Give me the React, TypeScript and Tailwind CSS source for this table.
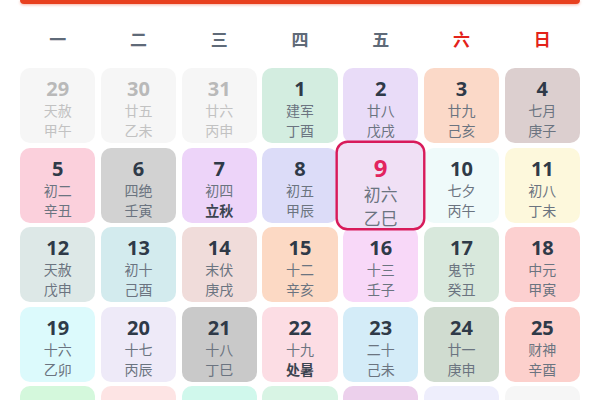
import React from "react";

type Day = {
  n: number;
  l1: string;
  l2: string;
  bg: string;
  muted?: boolean;
  term?: boolean;
  today?: boolean;
};

const weekdays = ["一", "二", "三", "四", "五", "六", "日"];

const days: Day[] = [
  { n: 29, l1: "天赦", l2: "甲午", bg: "bg-[#f6f6f6]", muted: true },
  { n: 30, l1: "廿五", l2: "乙未", bg: "bg-[#f6f6f6]", muted: true },
  { n: 31, l1: "廿六", l2: "丙申", bg: "bg-[#f6f6f6]", muted: true },
  { n: 1, l1: "建军", l2: "丁酉", bg: "bg-[#d3ede0]" },
  { n: 2, l1: "廿八", l2: "戊戌", bg: "bg-[#e9dcf8]" },
  { n: 3, l1: "廿九", l2: "己亥", bg: "bg-[#fbd9c8]" },
  { n: 4, l1: "七月", l2: "庚子", bg: "bg-[#dccfcf]" },

  { n: 5, l1: "初二", l2: "辛丑", bg: "bg-[#fbd0dc]" },
  { n: 6, l1: "四绝", l2: "壬寅", bg: "bg-[#d2d2d2]" },
  { n: 7, l1: "初四", l2: "立秋", bg: "bg-[#edd4f9]", term: true },
  { n: 8, l1: "初五", l2: "甲辰", bg: "bg-[#dcdcf8]" },
  { n: 9, l1: "初六", l2: "乙巳", bg: "bg-[#f0e0f5]", today: true },
  { n: 10, l1: "七夕", l2: "丙午", bg: "bg-[#effafa]" },
  { n: 11, l1: "初八", l2: "丁未", bg: "bg-[#fdf8dc]" },

  { n: 12, l1: "天赦", l2: "戊申", bg: "bg-[#dde8e7]" },
  { n: 13, l1: "初十", l2: "己酉", bg: "bg-[#d3ebee]" },
  { n: 14, l1: "末伏", l2: "庚戌", bg: "bg-[#f0dcda]" },
  { n: 15, l1: "十二", l2: "辛亥", bg: "bg-[#fcd9c4]" },
  { n: 16, l1: "十三", l2: "壬子", bg: "bg-[#f8d8f8]" },
  { n: 17, l1: "鬼节", l2: "癸丑", bg: "bg-[#d8e8dc]" },
  { n: 18, l1: "中元", l2: "甲寅", bg: "bg-[#fcd0d0]" },

  { n: 19, l1: "十六", l2: "乙卯", bg: "bg-[#dcfafc]" },
  { n: 20, l1: "十七", l2: "丙辰", bg: "bg-[#eeeaf8]" },
  { n: 21, l1: "十八", l2: "丁巳", bg: "bg-[#c9c9c9]" },
  { n: 22, l1: "十九", l2: "处暑", bg: "bg-[#fcdde4]", term: true },
  { n: 23, l1: "二十", l2: "己未", bg: "bg-[#d4ecf8]" },
  { n: 24, l1: "廿一", l2: "庚申", bg: "bg-[#d0dcd0]" },
  { n: 25, l1: "财神", l2: "辛酉", bg: "bg-[#fcd0cc]" },

  { n: 26, l1: "廿三", l2: "壬戌", bg: "bg-[#d4f8dc]" },
  { n: 27, l1: "廿四", l2: "癸亥", bg: "bg-[#fde4e4]" },
  { n: 28, l1: "廿五", l2: "甲子", bg: "bg-[#d0f8ec]" },
  { n: 29, l1: "廿六", l2: "乙丑", bg: "bg-[#d8f4e4]" },
  { n: 30, l1: "廿七", l2: "丙寅", bg: "bg-[#ecd0ec]" },
  { n: 31, l1: "廿八", l2: "丁卯", bg: "bg-[#eeeefc]" },
  { n: 1, l1: "廿九", l2: "戊辰", bg: "bg-[#f6f6f6]", muted: true },
];

function DayCell({ d }: { d: Day }) {
  const numColor = d.today
    ? "text-[#e2245e]"
    : d.muted
      ? "text-[#b9b9b9]"
      : "text-[#2f3a48]";
  const textColor = d.muted ? "text-[#c2c2c2]" : "text-[#6b7480]";

  return (
    <div
      className={`flex h-[75px] flex-col items-center rounded-[10px] pt-[8px] ${d.bg} ${
        d.today ? "relative z-10 scale-[1.2] border-2 border-[#d81b5a]" : ""
      }`}
    >
      <span className={`text-[20px] font-bold leading-[25px] ${numColor}`}>{d.n}</span>
      <span className={`text-[14px] leading-[20px] ${textColor}`}>{d.l1}</span>
      <span
        className={`text-[14px] leading-[20px] ${
          d.term ? "font-bold text-[#3b4450]" : textColor
        }`}
      >
        {d.l2}
      </span>
    </div>
  );
}

export default function App() {
  return (
    <div
      className="h-[400px] w-[600px] overflow-hidden bg-white px-[20px]"
      style={{ fontFamily: '"Noto Sans", "Noto Sans CJK SC", sans-serif' }}
    >
      <div className="h-[4px] rounded-b-[6px] bg-[#e8401e] shadow-[0_1px_3px_rgba(232,64,30,0.4)]" />

      <div className="mt-[24px] grid grid-cols-7 gap-x-[5.5px]">
        {weekdays.map((w, i) => (
          <div
            key={w}
            className={`text-center text-[17px] font-bold leading-[24px] ${
              i >= 5 ? "text-[#e3221a]" : "text-[#5f6a78]"
            }`}
          >
            {w}
          </div>
        ))}
      </div>

      <div className="mt-[16px] grid grid-cols-7 gap-x-[5.5px] gap-y-[4.5px]">
        {days.map((d, i) => (
          <DayCell key={i} d={d} />
        ))}
      </div>
    </div>
  );
}
